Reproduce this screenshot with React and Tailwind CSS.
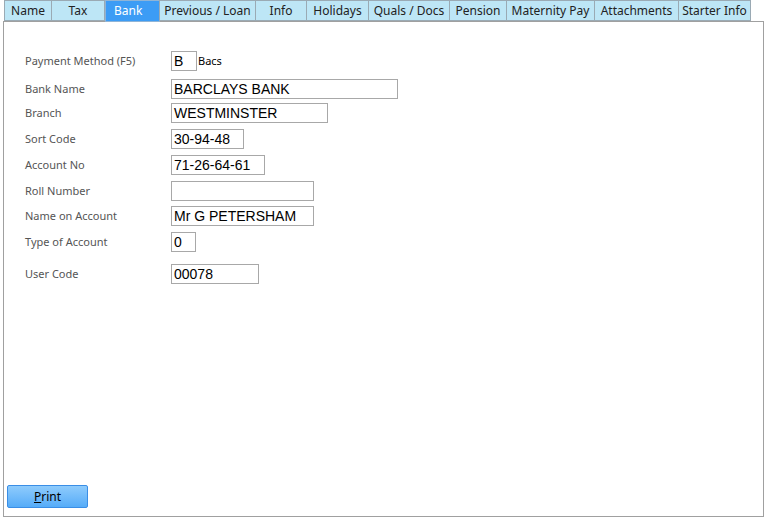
export default function App() {
  const tabs = [
    ["Name", 48], ["Tax", 54], ["Bank", 55], ["Previous / Loan", 97], ["Info", 52], ["Holidays", 63],
    ["Quals / Docs", 82], ["Pension", 58], ["Maternity Pay", 89], ["Attachments", 85], ["Starter Info", 73],
  ];
  const rows = [
    ["Payment Method (F5)", "B", 26, 51, true],
    ["Bank Name", "BARCLAYS BANK", 227, 28],
    ["Branch", "WESTMINSTER", 157, 24],
    ["Sort Code", "30-94-48", 73, 26],
    ["Account No", "71-26-64-61", 94, 26],
    ["Roll Number", "", 143, 26],
    ["Name on Account", "Mr G PETERSHAM", 143, 25],
    ["Type of Account", "0", 25, 26],
    ["User Code", "00078", 88, 32],
  ];
  return (
    <div className="w-[765px] h-[519px] bg-white relative overflow-hidden" style={{ fontFamily: '"Noto Sans", "Open Sans", sans-serif' }}>
      <div className="flex pl-[4px] h-[22px] relative z-10">
        {tabs.map(([t, w]) => (
          <div key={t} style={{ width: w }}
            className={t === "Bank"
              ? "h-[22px] bg-[#3c9cf5] text-white text-[12px] flex items-center pl-[8px] border border-[#8fb4d6]"
              : "h-[21px] bg-[#bde6f6] text-[#222] text-[12px] flex items-center justify-center border border-[#9aaab4] -ml-px first:ml-0"}>
            {t}
          </div>
        ))}
      </div>
      <div className="absolute left-[3px] top-[21px] w-[761px] h-[496px] border border-[#a0a0a0]"></div>
      <div className="relative flex flex-col">
        {rows.map(([l, v, w, mt, bacs], i) => (
          <div key={i} className="flex items-center h-[20px] pl-[25px]" style={{ marginTop: i === 0 ? mt - 22 : mt - 20 }}>
            <div className="w-[146px] text-[11px] text-[#555]">{l}</div>
            <div style={{ width: w }} className="h-[20px] border border-[#a8a8a8] bg-white text-[14px] leading-[18px] pl-[2px] text-black" >
              <span style={{ fontFamily: '"Liberation Sans", Arial, sans-serif' }}>{v}</span>
            </div>
            {bacs && <span className="ml-[1px] text-[11px] text-black">Bacs</span>}
          </div>
        ))}
      </div>
      <div className="absolute left-[7px] top-[485px] w-[81px] h-[23px] rounded-[2px] border border-[#3a8ee6] bg-gradient-to-b from-[#8ecbfc] to-[#55acf8] flex items-center justify-center text-[12px] text-black">
        <span><u>P</u>rint</span>
      </div>
    </div>
  );
}
